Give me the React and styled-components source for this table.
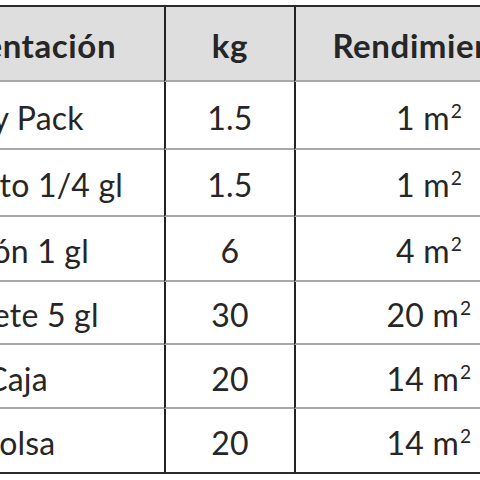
import React from "react";
import styled, { createGlobalStyle } from "styled-components";

const Global = createGlobalStyle`
  html, body { margin: 0; padding: 0; background: #fff; }
  body { font-family: Lato, "Noto Sans", sans-serif; }
`;

const Viewport = styled.div`
  width: 480px;
  height: 480px;
  overflow: hidden;
  padding-top: 5px;
  box-sizing: border-box;
`;

const Table = styled.table`
  margin-left: -130px;
  border-collapse: separate;
  border-spacing: 0;
  table-layout: fixed;
  width: 692px;
  border-top: 2px solid #2b2b2b;
  font-size: 32px;
  color: #262626;
`;

const HeadCell = styled.th`
  background: #dedede;
  font-weight: 700;
  font-size: 33px;
  letter-spacing: 0.6px;
  height: 75px;
  padding: 2px 0 0;
  box-sizing: border-box;
  text-align: center;
  border-bottom: 2px solid #a8a8a8;
  border-left: ${(p) => (p.$first ? "none" : "2px solid #222")};
`;

const Row = styled.tr`
  height: ${(p) => p.$h}px;
`;

const Cell = styled.td`
  box-sizing: border-box;
  padding: 4px 0 0;
  text-align: center;
  font-weight: 400;
  letter-spacing: 0.2px;
  border-bottom: 2px solid ${(p) => (p.$last ? "#2b2b2b" : "#a8a8a8")};
  border-left: ${(p) => (p.$first ? "none" : "2px solid #222")};
`;

const Sup = styled.sup`
  font-size: 0.6em;
  vertical-align: 0.6em;
  line-height: 0;
  margin-left: 1px;
`;

const rows = [
  ["Doy Pack", "1.5", "1", 68],
  ["Potecito 1/4 gl", "1.5", "1", 67],
  ["Galón 1 gl", "6", "4", 65],
  ["Cubete 5 gl", "30", "20", 63],
  ["Caja", "20", "14", 64],
  ["Bolsa", "20", "14", 65],
];

export default function App() {
  return (
    <>
      <Global />
      <Viewport>
        <Table>
          <colgroup>
            <col style={{ width: 294 }} />
            <col style={{ width: 130 }} />
            <col style={{ width: 268 }} />
          </colgroup>
          <thead>
            <tr>
              <HeadCell $first>Presentación</HeadCell>
              <HeadCell>kg</HeadCell>
              <HeadCell>Rendimiento</HeadCell>
            </tr>
          </thead>
          <tbody>
            {rows.map((r, i) => {
              const last = i === rows.length - 1;
              return (
                <Row key={i} $h={r[3]}>
                  <Cell $first $last={last}>{r[0]}</Cell>
                  <Cell $last={last}>{r[1]}</Cell>
                  <Cell $last={last}>
                    {r[2]} m<Sup>2</Sup>
                  </Cell>
                </Row>
              );
            })}
          </tbody>
        </Table>
      </Viewport>
    </>
  );
}
